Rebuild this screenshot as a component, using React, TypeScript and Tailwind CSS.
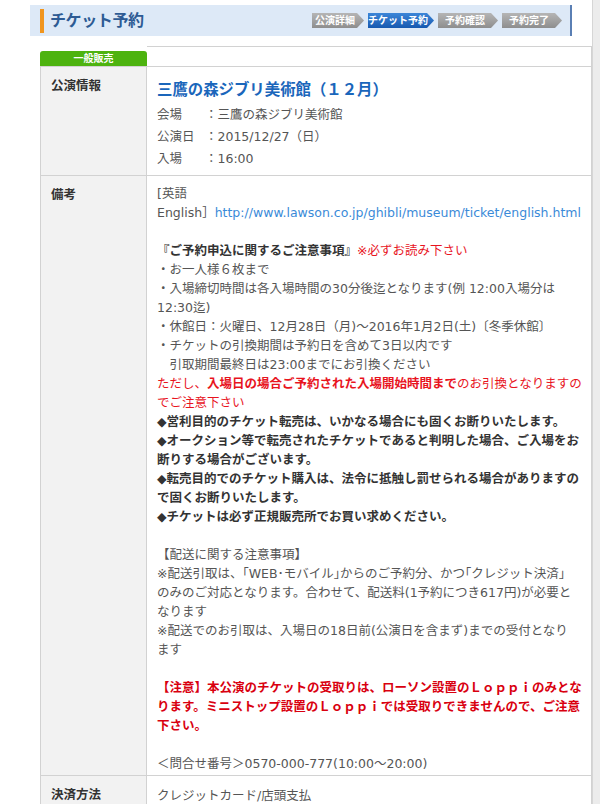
import React from "react";

const steps = [
  { label: "公演詳細", w: "w-[52px]", active: false },
  { label: "チケット予約", w: "w-[66px]", active: true },
  { label: "予約確認", w: "w-[60px]", active: false },
  { label: "予約完了", w: "w-[60px]", active: false },
];

function Header() {
  return (
    <div className="pt-[5px] pl-[30px]">
      <div className="flex h-[31px] w-[542px] items-center border-r-2 border-[#5a7fb4] bg-[#dde9f7]">
        <div className="ml-[10px] h-[24px] w-[4px] bg-[#f0951e]" />
        <h1 className="ml-[6px] text-[16px] font-bold tracking-tight text-[#2d5b94]">チケット予約</h1>
        <div className="ml-auto mr-[8px] flex gap-[4px]">
          {steps.map((s) => (
            <div
              key={s.label}
              className={`flex h-[15px] items-center justify-center pr-[6px] text-[10px] font-bold leading-none text-white [clip-path:polygon(0_0,calc(100%-7px)_0,100%_50%,calc(100%-7px)_100%,0_100%)] ${s.w} ${
                s.active ? "bg-gradient-to-b from-[#3c86d8] to-[#1659b0]" : "bg-gradient-to-b from-[#b5b5b5] to-[#8e8e8e]"
              }`}
            >
              {s.label}
            </div>
          ))}
        </div>
      </div>
    </div>
  );
}

function Row({ label, children, className = "" }: { label: string; children: React.ReactNode; className?: string }) {
  return (
    <div className="flex border-b border-[#d2d2d2]">
      <div className="w-[106px] shrink-0 border-r border-[#d2d2d2] bg-[#f2f2f2] pl-[10px] pt-[9px] text-[12.5px] font-bold leading-[20px] text-[#333]">
        {label}
      </div>
      <div className={`flex-1 pl-[10px] ${className}`}>{children}</div>
    </div>
  );
}

const Blank = () => <div className="h-[19px]" />;

export default function App() {
  return (
    <div className="flex min-h-[804px] bg-white font-['DejaVu_Sans','Noto_Sans_CJK_JP',sans-serif] text-[12.5px] text-[#555]">
      <div className="w-[592px] shrink-0">
        <Header />

        <div className="ml-[40px] mt-[10px]">
          <div className="flex h-[20px]">
            <div className="flex w-[107px] items-end">
              <div className="flex h-[15px] w-full items-center justify-center rounded-t-[3px] bg-[#4db30f] text-[10px] font-bold leading-none text-white">
                一般販売
              </div>
            </div>
            <div className="flex-1 border-r border-t border-[#d2d2d2]" />
          </div>

          <div className="border-l border-r border-t border-[#d2d2d2]">
            <Row label="公演情報" className="pb-[5px] pt-[10px]">
              <div className="text-[15.4px] font-bold leading-[27px] text-[#1a66bb]">三鷹の森ジブリ美術館（１２月）</div>
              <div className="flex leading-[22px]">
                <span className="w-[48px]">会場</span>
                <span>：三鷹の森ジブリ美術館</span>
              </div>
              <div className="flex leading-[22px]">
                <span className="w-[48px]">公演日</span>
                <span>：2015/12/27（日）</span>
              </div>
              <div className="flex leading-[22px]">
                <span className="w-[48px]">入場</span>
                <span>：16:00</span>
              </div>
            </Row>

            <Row label="備考" className="whitespace-nowrap pb-[2px] pt-[8px] leading-[19px]">
              <div>[英語</div>
              <div>
                English］<a href="#" className="text-[#3a8ad8]">http://www.lawson.co.jp/ghibli/museum/ticket/english.html</a>
              </div>
              <Blank />
              <div>
                <span className="font-bold text-[#333]">『ご予約申込に関するご注意事項』</span>
                <span className="text-[#e8141e]">※必ずお読み下さい</span>
              </div>
              <div>・お一人様６枚まで</div>
              <div>・入場締切時間は各入場時間の30分後迄となります(例 12:00入場分は</div>
              <div>12:30迄)</div>
              <div>・休館日：火曜日、12月28日（月)～2016年1月2日(土)〔冬季休館〕</div>
              <div>・チケットの引換期間は予約日を含めて3日以内です</div>
              <div>　引取期間最終日は23:00までにお引換ください</div>
              <div className="text-[#e8141e]">
                ただし、<span className="font-bold">入場日の場合ご予約された入場開始時間まで</span>のお引換となりますの
              </div>
              <div className="text-[#e8141e]">でご注意下さい</div>
              <div className="font-bold text-[#333]">
                <div>◆営利目的のチケット転売は、いかなる場合にも固くお断りいたします。</div>
                <div>◆オークション等で転売されたチケットであると判明した場合、ご入場をお</div>
                <div>断りする場合がございます。</div>
                <div>◆転売目的でのチケット購入は、法令に抵触し罰せられる場合がありますの</div>
                <div>で固くお断りいたします。</div>
                <div>◆チケットは必ず正規販売所でお買い求めください。</div>
              </div>
              <Blank />
              <div>【配送に関する注意事項】</div>
              <div>※配送引取は、「WEB･モバイル｣からのご予約分、かつ｢クレジット決済」</div>
              <div>のみのご対応となります。合わせて、配送料(1予約につき617円)が必要と</div>
              <div>なります</div>
              <div>※配送でのお引取は、入場日の18日前(公演日を含まず)までの受付となり</div>
              <div>ます</div>
              <Blank />
              <div className="font-bold text-[#d9000f]">
                <div>【注意】本公演のチケットの受取りは、ローソン設置のＬｏｐｐｉのみとな</div>
                <div>ります。ミニストップ設置のＬｏｐｐｉでは受取りできませんので、ご注意</div>
                <div>下さい。</div>
              </div>
              <Blank />
              <div>＜問合せ番号＞0570-000-777(10:00～20:00)</div>
            </Row>

            <Row label="決済方法" className="pb-[10px] pt-[10px] leading-[20px]">
              <div>クレジットカード/店頭支払</div>
            </Row>
          </div>
        </div>
      </div>
      <div className="w-[8px] shrink-0 border-l border-[#d6d6d6] bg-[#ececec]" />
    </div>
  );
}
